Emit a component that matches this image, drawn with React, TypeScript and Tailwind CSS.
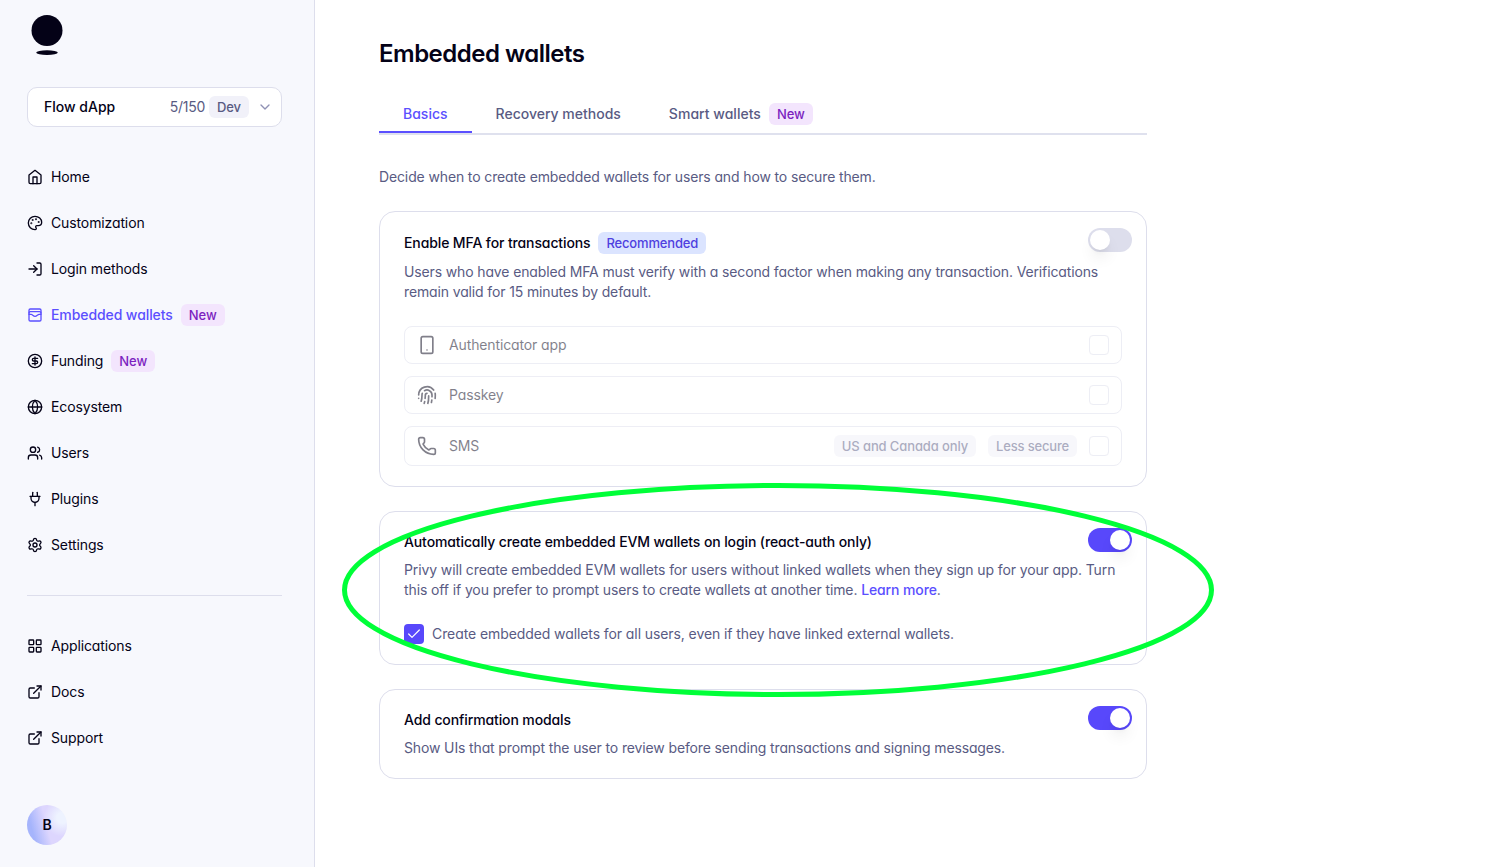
import React from "react";
import {
  Check, ChevronDown, CircleDollarSign, ExternalLink, Fingerprint, Globe, LayoutGrid,
  LogIn, Palette, Phone, Settings, Smartphone, Users, WalletCards,
} from "lucide-react";

type IconProps = { size?: number; strokeWidth?: number; className?: string };
type IconType = React.ComponentType<IconProps>;

function HomeIcon({ size = 16, strokeWidth = 2, className }: IconProps) {
  return (
    <svg className={className} width={size} height={size} viewBox="0 0 24 24" fill="none" stroke="currentColor" strokeWidth={strokeWidth} strokeLinecap="round" strokeLinejoin="round">
      <path d="M3 9l9-7 9 7v11a2 2 0 0 1-2 2H5a2 2 0 0 1-2-2z" />
      <path d="M9 22V12h6v10" />
    </svg>
  );
}

function PlugIcon({ size = 16, strokeWidth = 2, className }: IconProps) {
  return (
    <svg className={className} width={size} height={size} viewBox="0 0 24 24" fill="none" stroke="currentColor" strokeWidth={strokeWidth} strokeLinecap="round" strokeLinejoin="round">
      <path d="M12 22v-5" />
      <path d="M8.5 8V2" />
      <path d="M15.5 8V2" />
      <path d="M4.5 8h15" />
      <path d="M6 8v3a6 6 0 0 0 12 0V8" />
    </svg>
  );
}

function Badge({ children, className }: { children: React.ReactNode; className: string }) {
  return (
    <span className={`block h-[22px] shrink-0 rounded-md px-2 text-[13px] leading-[22px] font-medium whitespace-nowrap ${className}`}>
      {children}
    </span>
  );
}

function NewBadge() {
  return <Badge className="bg-[#f3e5fd] tracking-[-0.05px] text-[#7c1fc0]">New</Badge>;
}

function NavItem({ icon: Icon, label, active, isNew }: { icon: IconType; label: string; active?: boolean; isNew?: boolean }) {
  return (
    <a className={`flex h-[22px] items-center gap-2 text-sm ${active ? "font-medium tracking-[-0.09px] text-[#5b4fff]" : "tracking-[-0.12px] text-[#040217]"}`}>
      <Icon size={16} strokeWidth={2} className="shrink-0" />
      <span>{label}</span>
      {isNew && <NewBadge />}
    </a>
  );
}

function Toggle({ on }: { on?: boolean }) {
  return (
    <span className={`-my-1 flex h-6 w-11 shrink-0 items-center rounded-full p-0.5 ${on ? "justify-end bg-[#5848fb]" : "justify-start bg-[#dddeec]"}`}>
      <span className="h-5 w-5 rounded-full bg-white shadow-lg" />
    </span>
  );
}

function MethodRow({ icon: Icon, label, tall, children }: { icon: IconType; label: string; tall?: boolean; children?: React.ReactNode }) {
  return (
    <div className={`flex items-center gap-3 rounded-lg border border-[#dddeec] px-3 opacity-50 ${tall ? "h-10" : "h-[38px]"}`}>
      <Icon size={20} strokeWidth={2} className="shrink-0 text-[#040217]" />
      <span className="flex-1 text-sm tracking-[-0.13px] text-[#040217]">{label}</span>
      {children}
      <span className="h-5 w-5 rounded border border-[#dddeec]" />
    </div>
  );
}

function Card({ title, badge, on, className, description, children }: {
  title: string; badge?: React.ReactNode; on?: boolean; className: string; description: React.ReactNode; children?: React.ReactNode;
}) {
  return (
    <section className={`rounded-2xl border border-[#dddeec] pt-5 pl-6 ${className}`}>
      <div className="flex items-start justify-between pr-3.5">
        <div className="flex items-center gap-2">
          <h2 className="text-sm leading-5 font-medium tracking-[-0.115px] text-[#040217]">{title}</h2>
          {badge}
        </div>
        <Toggle on={on} />
      </div>
      <p className="mt-2 pr-6 text-sm leading-5 tracking-[-0.135px] text-[#595b83]">{description}</p>
      {children}
    </section>
  );
}

export default function App() {
  return (
    <div className="relative flex h-[867px] w-[1500px] overflow-hidden bg-white font-['Inter',sans-serif] text-[#040217] [font-feature-settings:'cv11']">
      <aside className="flex w-[315px] shrink-0 flex-col border-r border-[#dddeec] bg-[#f7f8fd] pr-8 pl-[27px]">
        <svg className="mt-[15px] ml-1 shrink-0" width="32" height="41" viewBox="0 0 32 41" fill="#040217">
          <circle cx="16" cy="15.5" r="15.5" />
          <ellipse cx="16" cy="37.6" rx="10.8" ry="2.4" />
        </svg>
        <div className="mt-[31px] flex h-10 shrink-0 items-center rounded-[10px] border border-[#dddeec] bg-white pr-2 pl-4 text-sm">
          <span className="flex-1 font-medium">Flow dApp</span>
          <span className="mr-1 tracking-[-0.25px] text-[#595b83]">5/150</span>
          <Badge className="bg-[#f1f1f9] tracking-[-0.1px] text-[#595b83]">Dev</Badge>
          <ChevronDown size={16} className="ml-2 text-[#8f91b4]" />
        </div>
        <nav className="mt-[39px] flex flex-col gap-6">
          <NavItem icon={HomeIcon} label="Home" />
          <NavItem icon={Palette} label="Customization" />
          <NavItem icon={LogIn} label="Login methods" />
          <NavItem icon={WalletCards} label="Embedded wallets" active isNew />
          <NavItem icon={CircleDollarSign} label="Funding" isNew />
          <NavItem icon={Globe} label="Ecosystem" />
          <NavItem icon={Users} label="Users" />
          <NavItem icon={PlugIcon} label="Plugins" />
          <NavItem icon={Settings} label="Settings" />
        </nav>
        <hr className="mt-[39px] border-[#dddeec]" />
        <nav className="mt-[39px] flex flex-col gap-6">
          <NavItem icon={LayoutGrid} label="Applications" />
          <NavItem icon={ExternalLink} label="Docs" />
          <NavItem icon={ExternalLink} label="Support" />
        </nav>
        <div className="mt-14 flex h-10 w-10 shrink-0 items-center justify-center rounded-full bg-[radial-gradient(circle_at_88%_32%,#eef3ff_0%,#eef3ff_12%,transparent_42%),linear-gradient(75deg,#a5b4fc_18%,#ddd6fe_50%)] text-sm font-semibold">
          B
        </div>
      </aside>

      <main className="flex w-[832px] flex-col pl-16">
        <h1 className="mt-[38px] text-2xl leading-8 font-semibold tracking-[-0.021em]">Embedded wallets</h1>
        <div className="mt-[26px] flex h-[39px] border-b-2 border-[#dfe1ee] text-sm font-medium text-[#595b83]">
          <div className="flex items-center border-b-2 border-[#5b4fff] px-6 pt-px text-[#5b4fff]">Basics</div>
          <div className="flex items-center border-b-2 border-transparent px-6 pt-px">Recovery methods</div>
          <div className="flex items-center gap-2 border-b-2 border-transparent px-6 pt-px">
            <span className="tracking-[0.02px]">Smart wallets</span>
            <NewBadge />
          </div>
        </div>
        <p className="mt-8 text-sm leading-5 tracking-[-0.13px] text-[#595b83]">Decide when to create embedded wallets for users and how to secure them.</p>

        <Card
          className="mt-6 h-[276px]"
          title="Enable MFA for transactions"
          badge={<Badge className="bg-[#dbe4ff] tracking-[-0.17px] text-[#4f3fe0]">Recommended</Badge>}
          description={<>Users who have enabled MFA must verify with a second factor when making any transaction. Verifications<br />remain valid for 15 minutes by default.</>}
        >
          <div className="mt-6 mr-6 flex flex-col gap-3">
            <MethodRow icon={Smartphone} label="Authenticator app" />
            <MethodRow icon={Fingerprint} label="Passkey" />
            <MethodRow icon={Phone} label="SMS" tall>
              <Badge className="bg-[#f1f1f9] tracking-[-0.12px] text-[#595b83]">US and Canada only</Badge>
              <Badge className="bg-[#f1f1f9] tracking-[-0.17px] text-[#595b83]">Less secure</Badge>
            </MethodRow>
          </div>
        </Card>

        <Card
          className="mt-6 h-[154px]"
          on
          title="Automatically create embedded EVM wallets on login (react-auth only)"
          description={
            <span className="tracking-[-0.112px]">
              Privy will create embedded EVM wallets for users without linked wallets when they sign up for your app. Turn<br />
              this off if you prefer to prompt users to create wallets at another time. <a className="font-medium text-[#5b4fff]">Learn more</a>.
            </span>
          }
        >
          <div className="mt-6 flex items-center gap-2 text-sm tracking-[-0.09px] text-[#595b83]">
            <span className="flex h-5 w-5 items-center justify-center rounded bg-[#5848fb] text-white">
              <Check size={16} strokeWidth={1.8} />
            </span>
            Create embedded wallets for all users, even if they have linked external wallets.
          </div>
        </Card>

        <Card
          className="mt-6 h-[90px]"
          on
          title="Add confirmation modals"
          description="Show UIs that prompt the user to review before sending transactions and signing messages."
        />
      </main>

      <svg className="pointer-events-none absolute top-[480px] left-[340px]" width="878" height="220" viewBox="0 0 878 220" fill="none">
        <ellipse cx="438" cy="110" rx="433.5" ry="104.5" stroke="#00ff38" strokeWidth="5" />
      </svg>
    </div>
  );
}
